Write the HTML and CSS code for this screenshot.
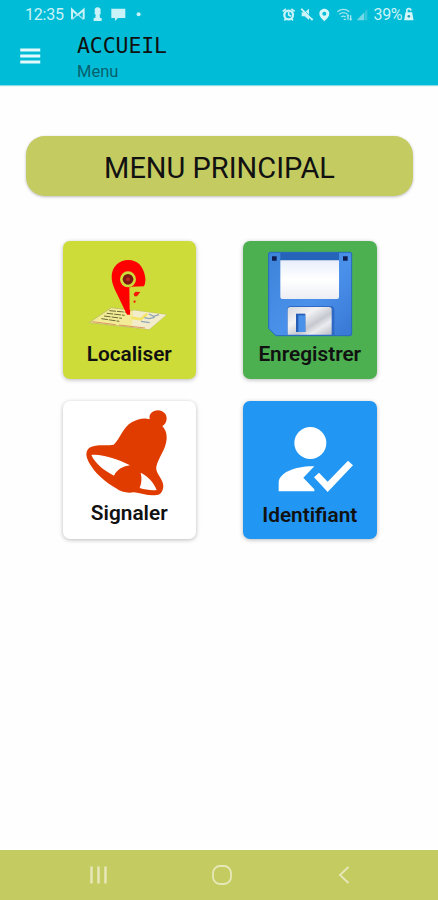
FILE: index.html
```html
<!DOCTYPE html>
<html lang="fr">
<head>
<meta charset="utf-8">
<title>Accueil</title>
<link rel="stylesheet" href="styles.css">
</head>
<body>
<header class="top">
  <div class="status">
    <span class="clock">12:35</span>
    <svg class="status-left" viewBox="210 15 220 50">
      <path d="M216 55V26l17 16 18-16v29" fill="none" stroke="#c9f3f8" stroke-width="6"/><path d="M217 55l16-15 17 15" fill="none" stroke="#a5e6ef" stroke-width="4"/>
      <g fill="#c9f3f8"><circle cx="293" cy="28" r="9"/><path d="M284 33h18v7h-3l1 11h5v9h-24v-9h5l1-11h-3zM334 23h42v28h-22l-9 9v-9h-11z"/><circle cx="416" cy="40" r="6"/></g>
    </svg>
    <svg class="status-right" viewBox="186 15 264 50">
      <g fill="none" stroke="#c9f3f8" stroke-width="7"><circle cx="209" cy="42" r="13"/><path d="M191 31l10-7M227 31l-10-7M196 58l5-5M222 58l-5-5M209 33v9l7 4" stroke-width="5"/></g>
      <path d="M248 34h9l13-11v34l-13-11h-9z" fill="#c9f3f8"/>
      <path d="M247 23l34 34" stroke="#c9f3f8" stroke-width="6"/>
      <path d="M250 22l30 30" stroke="#00bcd6" stroke-width="2"/>
      <path d="M316 23c-9 0-15 7-15 15 0 9 8 15 15 23 7-8 15-14 15-23 0-8-6-15-15-15zm0 9a6 6 0 1 1 0 12 6 6 0 0 1 0-12z" fill="#d5f7fa"/>
      <g fill="none" stroke="#a5e6ef" stroke-width="4"><path d="M355 32q18-14 36 0M361 40q12-10 24 0M367 48q6-5 13 0M374 55h7M387 43v13M395 43v13M384 46l3-4 3 4M392 53l3 4 3-4"/></g>
      <path d="M413 58l23-24v24z" fill="#75d8e5"/><path d="M438 32l7-8v34h-7z" fill="#35c8dc"/>
    </svg>
    <span class="percent">39%</span>
    <svg class="battery" viewBox="555 20 32 42"><path d="M566 37v-6q0-6 6-6t6 6" fill="none" stroke="#c9f3f8" stroke-width="5"/><path d="M562 36h20l4 24h-28z" fill="#d5f7fa"/><circle cx="572" cy="48" r="4" fill="#269bab"/></svg>
  </div>
  <div class="bar">
    <svg class="burger" viewBox="0 0 20 16"><path d="M0 2h20M0 8h20M0 14h20" stroke="#e2fafc" stroke-width="2.8"/></svg>
    <div class="titles">
      <div class="title">ACCUEIL</div>
      <div class="subtitle">Menu</div>
    </div>
  </div>
</header>
<main class="content">
  <h1 class="banner">MENU PRINCIPAL</h1>
  <div class="grid">
    <div class="card lime">
      <svg class="art" viewBox="22 18 402 288">
        <path d="M170 218L335 239 284 283 103 263z" fill="#f3eb96" stroke="#c2c26c" stroke-width="3"/>
        <path d="M235 226l100 13-51 44-52-7z" fill="#f2eccb"/>
        <path d="M164 227l56 5M156 235l54 6M148 243l54 7M140 251l54 8" stroke="#6a6a37" stroke-width="3" stroke-dasharray="20 3"/>
        <path d="M113 260l70 9M193 270l78 9" stroke="#dd9767" stroke-width="3"/>
        <path d="M230 248l28 5 20-17" fill="none" stroke="#f4e465" stroke-width="8"/>
        <path d="M283 237l14 7 16-5M269 248l14 3 17-4M259 259l26 4" fill="none" stroke="#8fa5b4" stroke-width="4"/>
        <path d="M221 75c-29 0-50 22-50 50 0 20 8 34 15 50l31 64h9l3-84 39-1c5-10 5-22 3-31-5-29-22-48-50-48z" fill="#f00"/>
        <circle cx="220" cy="133" r="24" fill="#cddc39"/><circle cx="220" cy="133" r="16" fill="#7d1713"/><circle cx="220" cy="133" r="6" fill="#b52a20"/>
        <path d="M224 157h16v21l-8 31v16h-7z" fill="#cddc39"/><path d="M237 176l6-6 14 1-10 13h-8zM236 198l6-2 1 6-5 2z" fill="#f41805"/>
      </svg>
      <span class="label localiser">Localiser</span>
    </div>
    <div class="card green">
      <svg class="art" viewBox="22 18 402 288">
        <defs>
          <linearGradient id="body" x2="1" y2="1"><stop stop-color="#3d83d8"/><stop offset=".55" stop-color="#4a91eb"/><stop offset="1" stop-color="#3877d3"/></linearGradient>
          <linearGradient id="paper" x2="0" y2="1"><stop stop-color="#e8eefa"/><stop offset=".5" stop-color="#fff"/><stop offset="1" stop-color="#eceef3"/></linearGradient>
          <linearGradient id="metal" x2="1" y2="1"><stop stop-color="#d5d8de"/><stop offset=".35" stop-color="#f3f3f5"/><stop offset=".6" stop-color="#c5c8cf"/><stop offset=".75" stop-color="#ececef"/><stop offset="1" stop-color="#b8bcc5"/></linearGradient>
        </defs>
        <path d="M104 52h239q5 0 5 5v240q0 5-5 5H121l-22-21V57q0-5 5-5z" fill="url(#body)" stroke="#2668bf" stroke-width="3"/>
        <path d="M134 53h176v25H134z" fill="#2664b9"/>
        <path d="M109 64h14v13h-14zM322 64h14v13h-14z" fill="#101d52"/>
        <path d="M134 76h176v110q0 6-6 6H140q-6 0-6-6z" fill="url(#paper)"/>
        <path d="M155 301v-78q0-10 10-10h120q11 0 11 11v77z" fill="#2e6ac5"/>
        <path d="M156 299v-75q0-8 8-8h116q8 0 8 8v75z" fill="url(#metal)"/>
        <path d="M181 236h28v55h-28z" fill="#265db5"/><path d="M188 241h21v50h-21z" fill="#4a91e9"/>
      </svg>
      <span class="label enregistrer">Enregistrer</span>
    </div>
    <div class="card white">
      <svg class="art" viewBox="22 18 402 288">
        <path d="M285 73c-3-16 9-27 25-27 15 0 26 11 26 24 0 11-5 19-13 23 9 10 14 22 13 38-2 32-24 54-31 84-4 20 22 37 21 59-1 17-9 27-26 27-24 1-43-7-62-9-21 3-38 0-54-12-29-18-56-39-73-65-12-18-23-38-10-54 19-16 53-7 76-12 21-20 29-54 54-67 18-9 37-15 54-9z" fill="#e03c00"/>
        <path d="M110 180c32-4 79 13 116 31-20 2-39 12-48 31-32-17-56-36-68-62z" fill="#fff"/>
        <path d="M258 233c23 12 39 29 48 52-16 2-34-1-51-6 6-15 7-30 3-46z" fill="#fff"/>
      </svg>
      <span class="label signaler">Signaler</span>
    </div>
    <div class="card blue">
      <svg class="art" viewBox="22 18 402 288" fill="#fff">
        <circle cx="224" cy="144" r="48"/>
        <path d="M129 289v-26c0-31 55-51 107-49l-33 34 33 35v6z"/>
        <path d="M235 247l15-14 26 27 61-63 15 14-76 80z"/>
      </svg>
      <span class="label identifiant">Identifiant</span>
    </div>
  </div>
</main>
<nav class="nav">
  <svg viewBox="0 0 24 24"><path d="M4.5 3.500v17M11.500 3.500v17M18.500 3.500v17" stroke-width="2.5"/></svg>
  <svg viewBox="0 0 24 24"><rect x="3" y="3" width="18" height="18" rx="7"/></svg>
  <svg viewBox="0 0 24 24"><path d="M16.500 4L8 12l8.500 8"/></svg>
</nav>
</body>
</html>
```
FILE: styles.css
```css
* { box-sizing: border-box; }
body {
  margin: 0;
  height: 900px;
  display: flex;
  flex-direction: column;
  background: #fefefe;
  font-family: Roboto, sans-serif;
  color: #111;
  overflow: hidden;
}
.top { height: 85px; background: #00bcd6; box-shadow: 0 1px 1px #8fdbe5; flex: none; }
.status {
  display: flex;
  align-items: center;
  height: 28px;
  padding-left: 25px;
  color: #c9f3f8;
  font-size: 16px;
}
.clock { width: 45px; letter-spacing: -.2px; }
.status-left { width: 73.3px; height: 16.7px; }
.status-right { width: 88px; height: 16.7px; margin-left: 137.7px; }
.percent { width: 29px; margin-left: 4.5px; letter-spacing: -.3px; }
.battery { width: 11px; height: 14px; margin-left: 1px; }
.bar { display: flex; padding-left: 20px; }
.burger { width: 20.5px; height: 16px; margin-top: 19.5px; }
.titles { margin-left: 36.5px; padding-top: 5px; }
.title { font: 21.5px/26px "DejaVu Sans Mono", monospace; letter-spacing: -.1px; }
.subtitle { font-size: 16.5px; line-height: 25px; color: #08616e; }
.content { flex: 1; padding-top: 51px; }
.banner {
  width: 387px;
  height: 60px;
  margin: 0 auto 0 26px;
  border-radius: 19px;
  background: #c4cb61;
  box-shadow: 0 1px 3px #0004;
  font-size: 29px;
  font-weight: 400;
  line-height: 64px;
  text-align: center;
}
.grid {
  display: grid;
  grid-template-columns: 133.5px 133.5px;
  column-gap: 47px;
  row-gap: 22px;
  margin: 45px 0 0 62.5px;
}
.card {
  height: 138px;
  display: flex;
  flex-direction: column;
  align-items: center;
  border-radius: 7px;
  box-shadow: 0 1px 4px #0004;
}
.lime { background: #cddc39; }
.green { background: #4caf50; }
.white { background: #fff; }
.blue { background: #2196f3; }
.art { width: 134px; height: 96px; flex: none; }
.label {
  font-size: 20.8px;
  font-weight: 600;
  line-height: 24px;
  white-space: nowrap;
  margin-top: 5px;
}
.signaler { margin-top: 4px; }
.identifiant { margin-top: 6px; }
.nav {
  height: 50.5px;
  flex: none;
  display: flex;
  align-items: center;
  justify-content: space-between;
  padding: 0 82px 0 87px;
  background: #c4cb61;
}
.nav svg { width: 24px; height: 24px; fill: none; stroke: #e6e8b9; stroke-width: 1.8; }
```
